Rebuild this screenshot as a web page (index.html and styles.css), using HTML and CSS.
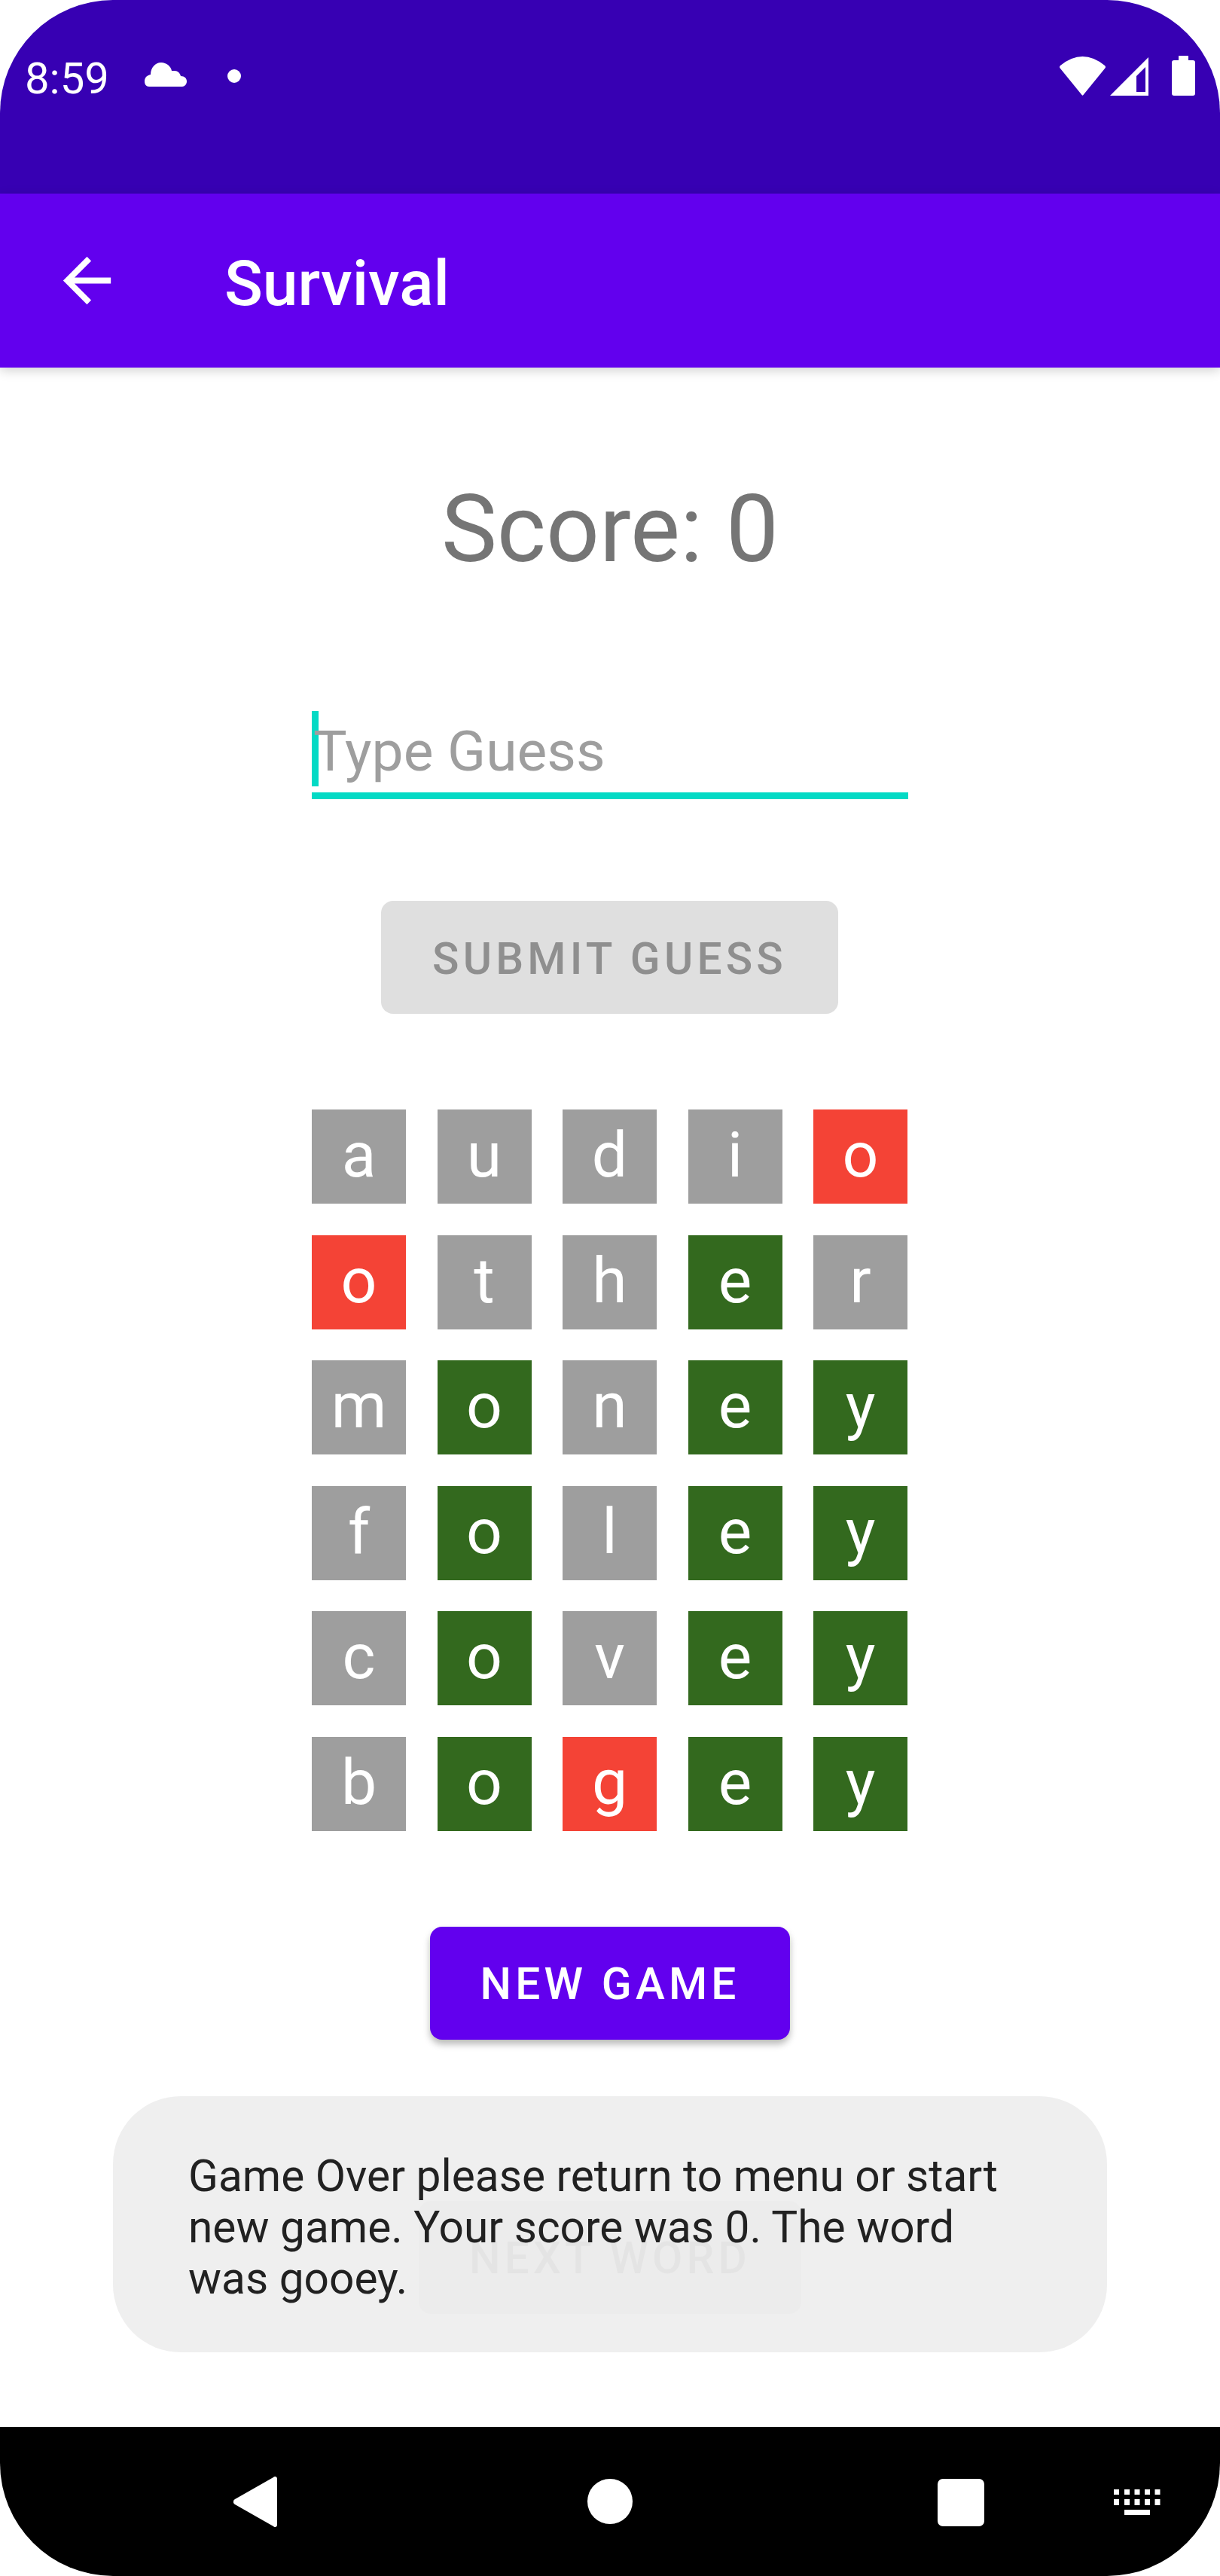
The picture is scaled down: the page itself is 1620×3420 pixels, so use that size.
FILE: index.html
```html
<!DOCTYPE html>
<html lang="en">
<head>
    <meta charset="UTF-8">
    <meta name="viewport" content="width=device-width, initial-scale=1.0">
    <title>Survival</title>
    <link rel="stylesheet" href="styles.css">
</head>
<body>
    <div class="phone">
        <!-- Android status bar -->
        <div class="status-bar">
            <span class="time">8:59</span>
            <svg class="cloud-icon" viewBox="0 0 56 32"><path fill="#fff" d="M22 0c7 0 13 5 14 11h4c4 0 7 3 8 7 5 0 8 3 8 7 0 4-3 7-6 7H6c-4 0-6-3-6-7 0-5 3-8 8-9C8 7 14 0 22 0z"/></svg>
            <span class="notif-dot"></span>
            <div class="status-right">
                <svg class="wifi-icon" viewBox="0 0 61 52"><path fill="#fff" d="M1 12Q30.500-12 60 12q2 2 0 4L31.500 51q-1 1.500-2 0L1 16q-2-2 0-4z"/></svg>
                <svg class="signal-icon" viewBox="0 0 51 51"><path fill="#fff" fill-rule="evenodd" d="M51 0v51H0zM35 25v21h12V13z"/></svg>
                <svg class="battery-icon" viewBox="0 0 31 53"><path fill="#fff" d="M9 0h13v6h6c2 0 3 1 3 3v41c0 2-1 3-3 3H3c-2 0-3-1-3-3V9c0-2 1-3 3-3h6z"/></svg>
            </div>
        </div>

        <!-- App bar -->
        <div class="app-bar">
            <svg class="back-icon" viewBox="0 0 24 24"><path fill="#fff" d="M20 11H7.830l5.590-5.590L12 4l-8 8 8 8 1.410-1.410L7.830 13H20v-2z"/></svg>
            <span class="app-title">Survival</span>
        </div>

        <!-- Game screen -->
        <div class="content">
            <div class="score">Score: 0</div>

            <div class="guess-field">
                <span class="cursor"></span>
                <span class="hint">Type Guess</span>
            </div>

            <button class="btn btn-disabled submit-btn" type="button">SUBMIT GUESS</button>

            <div class="board">
                <div class="tile grey">a</div>
                <div class="tile grey">u</div>
                <div class="tile grey">d</div>
                <div class="tile grey">i</div>
                <div class="tile red">o</div>

                <div class="tile red">o</div>
                <div class="tile grey">t</div>
                <div class="tile grey">h</div>
                <div class="tile green">e</div>
                <div class="tile grey">r</div>

                <div class="tile grey">m</div>
                <div class="tile green">o</div>
                <div class="tile grey">n</div>
                <div class="tile green">e</div>
                <div class="tile green">y</div>

                <div class="tile grey">f</div>
                <div class="tile green">o</div>
                <div class="tile grey">l</div>
                <div class="tile green">e</div>
                <div class="tile green">y</div>

                <div class="tile grey">c</div>
                <div class="tile green">o</div>
                <div class="tile grey">v</div>
                <div class="tile green">e</div>
                <div class="tile green">y</div>

                <div class="tile grey">b</div>
                <div class="tile green">o</div>
                <div class="tile red">g</div>
                <div class="tile green">e</div>
                <div class="tile green">y</div>
            </div>

            <button class="btn btn-primary new-game-btn" type="button">NEW GAME</button>
            <button class="btn btn-disabled next-btn" type="button">NEXT WORD</button>

            <!-- Snackbar sits over the next word button -->
            <div class="snackbar">Game Over please return to menu or start new game. Your score was 0. The word was gooey.</div>
        </div>

        <!-- Navigation bar -->
        <div class="nav-bar">
            <svg class="nav-back" viewBox="0 0 58 67"><path fill="#fff" d="M58 3v61c0 3-3 4-5 2L2 37c-3-2-3-5 0-7L53 1c2-2 5-1 5 2z"/></svg>
            <span class="nav-home"></span>
            <span class="nav-recent"></span>
            <svg class="nav-keyboard" viewBox="0 0 62 34">
                <g fill="#fff">
                    <rect x="0" y="0" width="7" height="7"/><rect x="14" y="0" width="7" height="7"/><rect x="27.500" y="0" width="7" height="7"/><rect x="41" y="0" width="7" height="7"/><rect x="54.500" y="0" width="7" height="7"/>
                    <rect x="0" y="13" width="7" height="8"/><rect x="14" y="13" width="7" height="8"/><rect x="27.500" y="13" width="7" height="8"/><rect x="41" y="13" width="7" height="8"/><rect x="54.500" y="13" width="7" height="8"/>
                    <rect x="14" y="27" width="34" height="7"/>
                </g>
            </svg>
        </div>
    </div>
</body>
</html>
```

FILE: styles.css
```css
body {
    margin: 0;
    background-color: #fff;
    font-family: Roboto, "Liberation Sans", sans-serif;
}
.phone {
    position: relative;
    width: 1620px;
    height: 3420px;
    display: flex;
    flex-direction: column;
    border-radius: 150px;
    overflow: hidden;
    background-color: #fff;
}

/* status bar */
.status-bar {
    height: 257px;
    flex: none;
    display: flex;
    align-items: flex-start;
    padding: 0 33px 0 33px;
    box-sizing: border-box;
    background-color: #3700b3;
}
.time {
    width: 112px;
    margin-top: 72px;
    font-size: 58px;
    line-height: 64px;
    color: #fff;
}
.cloud-icon {
    width: 56px;
    height: 32px;
    margin: 83px 0 0 47px;
}
.notif-dot {
    width: 18px;
    height: 18px;
    margin: 92px 0 0 54px;
    border-radius: 50%;
    background-color: #fff;
}
.status-right {
    margin-left: auto;
    display: flex;
    align-items: flex-start;
}
.wifi-icon {
    width: 61px;
    height: 52px;
    margin-top: 75px;
}
.signal-icon {
    width: 51px;
    height: 51px;
    margin: 76px 0 0 6px;
}
.battery-icon {
    width: 31px;
    height: 53px;
    margin: 74px 0 0 31px;
}

/* app bar */
.app-bar {
    height: 231px;
    flex: none;
    display: flex;
    align-items: center;
    padding-left: 68px;
    background-color: #6200ee;
    box-shadow: 0 4px 14px rgba(0, 0, 0, 0.18);
    z-index: 1;
}
.back-icon {
    width: 95px;
    height: 95px;
}
.app-title {
    margin: 8px 0 0 135px;
    font-size: 84px;
    font-weight: 500;
    color: #fff;
}

/* game screen */
.content {
    position: relative;
    flex: 1;
    display: flex;
    flex-direction: column;
    align-items: center;
}
.score {
    margin-top: 134px;
    font-size: 124.500px;
    line-height: 160px;
    color: #757575;
}
.guess-field {
    width: 792px;
    height: 117px;
    margin-top: 153px;
    display: flex;
    border-bottom: 9px solid #03dac5;
}
.cursor {
    width: 9px;
    height: 100px;
    flex: none;
    margin-top: 9px;
    background-color: #03dac5;
}
.hint {
    margin: 20px 0 0 -7px;
    font-size: 75px;
    line-height: 84px;
    color: #9e9e9e;
}
.btn {
    display: block;
    height: 150px;
    padding: 3px 0 0;
    border: none;
    border-radius: 16px;
    font-family: Roboto, "Liberation Sans", sans-serif;
    font-size: 58.500px;
    font-weight: 500;
    letter-spacing: 5.200px;
    text-align: center;
}
.btn-disabled {
    background-color: #dfdfdf;
    color: #8f8f8f;
}
.btn-primary {
    background-color: #6200ee;
    color: #fff;
    box-shadow: 0 6px 10px rgba(0, 0, 0, 0.28);
}
.submit-btn {
    width: 607px;
    margin: 135px 1px 0 0;
}
.board {
    width: 792px;
    margin-top: 127px;
    display: grid;
    grid-template-columns: repeat(5, 125px);
    grid-auto-rows: 125px;
    gap: 41.500px;
}
.tile {
    display: flex;
    align-items: center;
    justify-content: center;
    padding-bottom: 4px;
    box-sizing: border-box;
    font-size: 84px;
    color: #fff;
}
.grey {
    background-color: #9e9e9e;
}
.red {
    background-color: #f44336;
}
.green {
    background-color: #33691e;
}
.new-game-btn {
    width: 478px;
    margin-top: 127px;
}
.next-btn {
    width: 508px;
    margin-top: 214px;
}
.snackbar {
    position: absolute;
    left: 150px;
    top: 2295px;
    width: 1320px;
    height: 340px;
    padding: 72px 100px 0 100px;
    box-sizing: border-box;
    border-radius: 90px;
    background-color: rgba(237, 237, 237, 0.906);
    font-size: 58.600px;
    line-height: 68px;
    color: #212121;
}

/* navigation bar */
.nav-bar {
    position: relative;
    height: 198px;
    flex: none;
    background-color: #000;
}
.nav-back {
    position: absolute;
    left: 310px;
    top: 66px;
    width: 58px;
    height: 67px;
}
.nav-home {
    position: absolute;
    left: 780px;
    top: 69px;
    width: 60px;
    height: 60px;
    border-radius: 50%;
    background-color: #fff;
}
.nav-recent {
    position: absolute;
    left: 1245px;
    top: 69px;
    width: 62px;
    height: 63px;
    border-radius: 7px;
    background-color: #fff;
}
.nav-keyboard {
    position: absolute;
    left: 1479px;
    top: 83px;
    width: 62px;
    height: 34px;
}
```
